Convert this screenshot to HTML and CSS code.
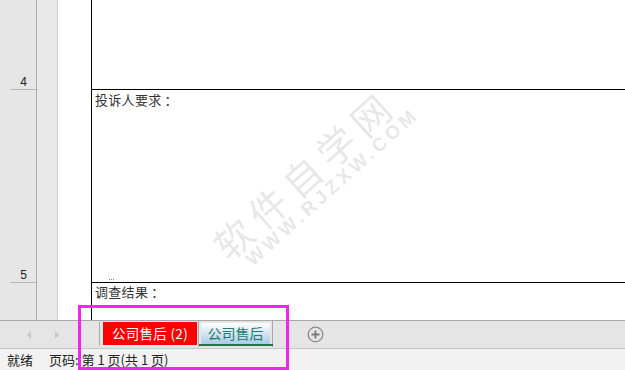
FILE: index.html
```html
<!DOCTYPE html>
<html lang="zh">
<head>
<meta charset="utf-8">
<link rel="stylesheet" href="styles.css">
</head>
<body>
<div class="app">
  <div class="sheet">
    <div class="rowhdr">
      <div class="rh rh1"><span>4</span></div>
      <div class="rh rh2"><span>5</span></div>
    </div>
    <div class="gutter"></div>
    <div class="grid">
      <div class="cells">
        <div class="cell c1"></div>
        <div class="cell c2">投诉人要求<span class="colon">：</span></div>
        <div class="cell c3">调查结果<span class="colon">：</span></div>
      </div>
      <div class="tick"></div>
      <div class="watermark">
        <div class="wm-big">软件自学网</div>
        <div class="wm-small">WWW.RJZXW.COM</div>
      </div>
    </div>
  </div>
  <div class="tabbar">
    <div class="nav">
      <svg width="8" height="10" viewBox="0 0 8 10"><path d="M6 1 L2 5 L6 9 Z" fill="#c8c8c8"/></svg>
      <svg width="8" height="10" viewBox="0 0 8 10"><path d="M2 1 L6 5 L2 9 Z" fill="#c8c8c8"/></svg>
    </div>
    <div class="sep"></div>
    <div class="tab tab-red">公司售后 (2)</div>
    <div class="tab tab-active">公司售后</div>
    <div class="add">
      <svg width="17" height="17" viewBox="0 0 17 17"><circle cx="8.5" cy="8.5" r="7.3" fill="none" stroke="#8a8a8a" stroke-width="1.3"/><path d="M8.5 4.5 V12.5 M4.5 8.5 H12.5" stroke="#7a7a7a" stroke-width="1.8"/></svg>
    </div>
  </div>
  <div class="status">
    <span class="st1">就绪</span>
    <span class="st2">页码: 第 1 页(共 1 页)</span>
  </div>
  <div class="highlight"></div>
</div>
</body>
</html>
```
FILE: styles.css
```css
* { box-sizing: border-box; }
html, body { margin: 0; padding: 0; }
body {
  font-family: "Noto Sans CJK SC", "Liberation Sans", sans-serif;
  color: #333;
  background: #fff;
}
.app {
  position: relative;
  width: 625px;
  height: 370px;
  display: flex;
  flex-direction: column;
  overflow: hidden;
}
.sheet {
  height: 320px;
  display: flex;
}
.rowhdr {
  width: 37px;
  background: #e6e6e6;
  border-right: 1px solid #ababab;
  display: flex;
  flex-direction: column;
}
.rh {
  position: relative;
  display: flex;
  align-items: flex-end;
  justify-content: flex-end;
  padding-right: 9px;
  font-family: "Liberation Sans", sans-serif;
  font-size: 12px;
  color: #222;
}
.rh::after {
  content: "";
  position: absolute;
  left: 10px;
  right: 0;
  bottom: 0;
  border-bottom: 1px solid #b8b8b8;
}
.rh span { line-height: 14px; padding-bottom: 1px; }
.rh1 { height: 90px; }
.rh2 { height: 193px; }
.gutter {
  width: 21px;
  background: #e8e8e8;
  border-right: 1px solid #cfcfcf;
}
.grid {
  flex: 1;
  position: relative;
  background: #fff;
  padding-left: 33px;
}
.cells {
  border-left: 1px solid #000;
  height: 100%;
  display: flex;
  flex-direction: column;
}
.cell {
  font-size: 13px;
  line-height: 18px;
  padding-left: 3px;
  color: #333;
  letter-spacing: 0.3px;
}
.colon { margin-left: 3px; }
.c1 { height: 90px; border-bottom: 1px solid #000; }
.c2 { height: 193px; border-bottom: 1px solid #000; padding-top: 1px; }
.c3 { flex: 1; padding-top: 0; }
.tick {
  position: absolute;
  left: 51px;
  top: 279px;
  width: 5px;
  height: 1px;
  border-top: 1px dotted #888;
}
.watermark {
  position: absolute;
  left: 108px;
  top: 152px;
  width: 290px;
  transform: rotate(-42deg);
  transform-origin: center;
  text-align: center;
  color: rgba(0, 0, 0, 0.11);
  pointer-events: none;
}
.wm-big {
  font-size: 38px;
  font-weight: 400;
  letter-spacing: 8px;
  line-height: 38px;
}
.wm-small {
  font-family: "Liberation Sans", sans-serif;
  font-size: 19px;
  font-weight: bold;
  letter-spacing: 4px;
  line-height: 20px;
  margin-left: 24px;
}
.tabbar {
  height: 28px;
  background: #e5e5e5;
  border-top: 1px solid #a8a8a8;
  display: flex;
  align-items: flex-start;
}
.nav {
  width: 99px;
  height: 27px;
  display: flex;
  align-items: center;
  padding-left: 25px;
  gap: 20px;
}
.sep {
  width: 1px;
  height: 24px;
  margin-top: 1px;
  background: #a8a8a8;
}
.tab {
  font-size: 13.5px;
  line-height: 22px;
  white-space: nowrap;
}
.tab-red {
  margin-left: 3px;
  margin-top: 1px;
  width: 94px;
  height: 23px;
  background: #ff0000;
  color: #fff;
  text-align: center;
  letter-spacing: 0.3px;
}
.tab-active {
  margin-top: -1px;
  margin-left: 1px;
  width: 75px;
  height: 27px;
  border: 1px solid #a8a8a8;
  border-bottom: none;
  background: #e5e5e5;
  padding: 1px 0 0 0;
  position: relative;
  color: #217a6a;
  text-align: center;
  isolation: isolate;
  font-size: 14px;
}
.tab-active::before {
  content: "";
  position: absolute;
  left: 2px;
  right: 2px;
  top: 2px;
  height: 21px;
  background: linear-gradient(#ffffff, #a9cbe6);
  z-index: -1;
}
.tab-active::after {
  content: "";
  position: absolute;
  left: 0;
  right: -1px;
  top: 23px;
  height: 2px;
  background: #217346;
}
.add {
  margin-left: 34px;
  height: 27px;
  display: flex;
  align-items: center;
}
.status {
  height: 22px;
  background: #f2f2f2;
  border-top: 1px solid #c6c6c6;
  display: flex;
  align-items: center;
  font-size: 13px;
  color: #222;
}
.st1 { margin-left: 7px; }
.st2 { margin-left: 16px; }
.highlight {
  position: absolute;
  left: 78px;
  top: 305px;
  width: 211px;
  height: 65px;
  border: 3px solid #f026f0;
  pointer-events: none;
}
```
